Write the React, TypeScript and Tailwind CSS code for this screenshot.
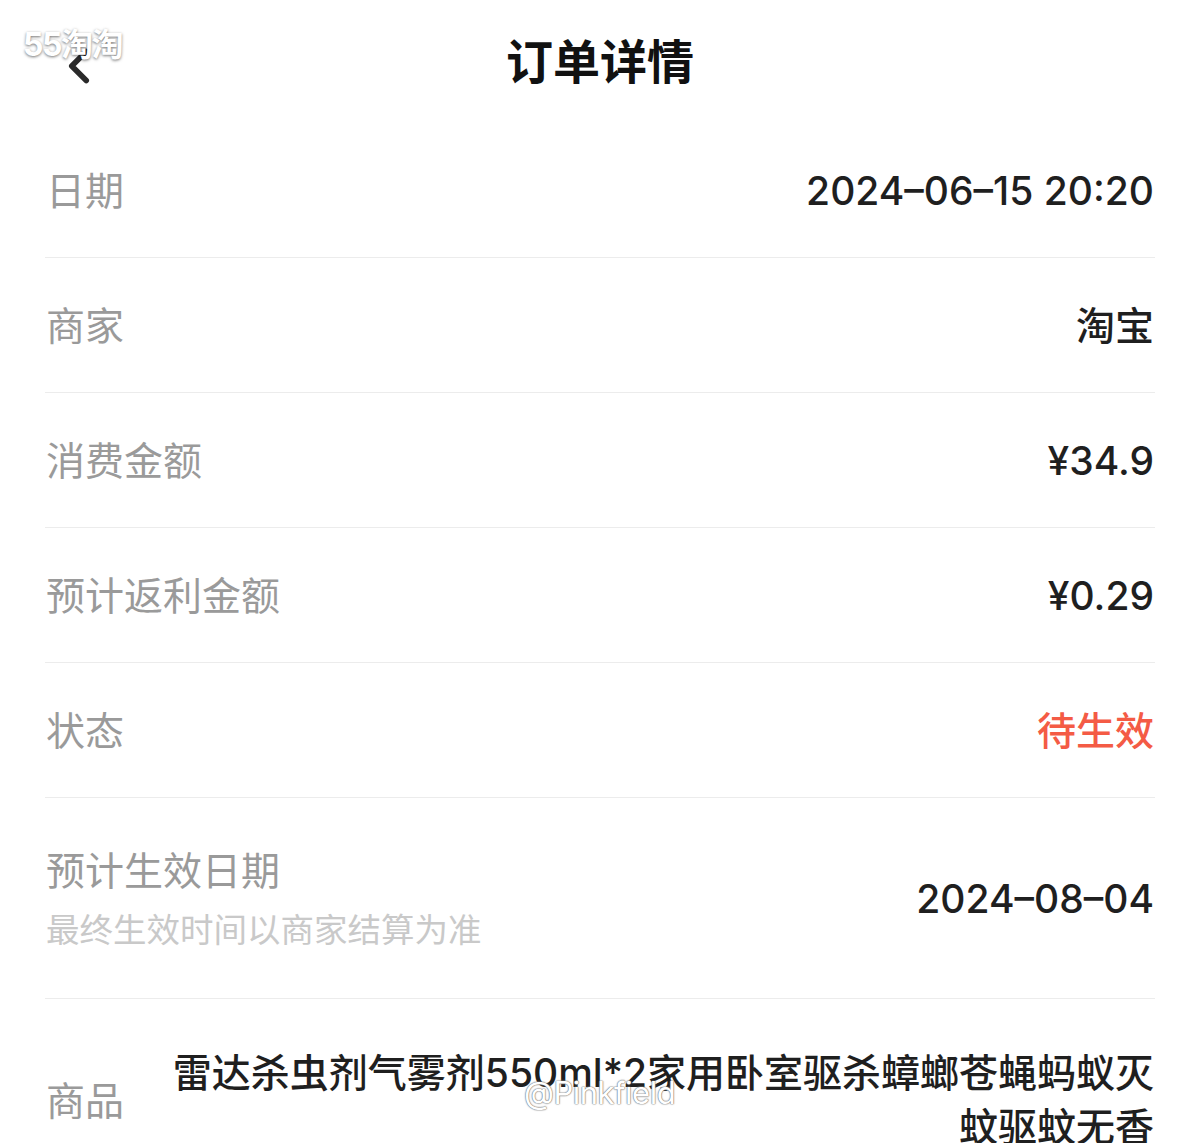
import { ChevronLeft } from "lucide-react";

const font = { fontFamily: '"Inter", "Noto Sans CJK SC", sans-serif' };

type Row = { label: string; value: string; accent?: boolean };

const rows: Row[] = [
  { label: "日期", value: "2024–06–15 20:20" },
  { label: "商家", value: "淘宝" },
  { label: "消费金额", value: "¥34.9" },
  { label: "预计返利金额", value: "¥0.29" },
  { label: "状态", value: "待生效", accent: true },
];

export default function App() {
  return (
    <div className="relative min-h-[1143px] w-[1200px] overflow-hidden bg-white" style={font}>
      {/* 顶部水印 */}
      <div className="absolute left-[23px] top-[21px] z-10 text-[32px] font-bold tracking-[-1.5px] text-white [text-shadow:0_1px_3px_rgba(0,0,0,0.55)]">
        55淘淘
      </div>

      {/* 标题栏 */}
      <header className="relative flex h-[123px] items-center justify-center">
        <ChevronLeft className="absolute left-[50px] top-[37px] h-[58px] w-[58px] text-[#2a2a2a]" strokeWidth={2.3} />
        <h1 className="text-[47px] font-bold leading-none text-[#111]">订单详情</h1>
      </header>

      <div className="mx-[45px]">
        {rows.map((r) => (
          <div key={r.label} className="flex h-[135px] items-center justify-between border-b border-[#ececec] px-px">
            <span className="text-[39px] leading-none text-[#9a9a9a]">{r.label}</span>
            <span className={`text-[39px] font-medium leading-none ${r.accent ? "text-[#f45b45]" : "text-[#1f1f1f]"}`}>
              {r.value}
            </span>
          </div>
        ))}

        {/* 预计生效日期 */}
        <div className="flex h-[201px] items-center justify-between border-b border-[#ececec] px-px">
          <div className="flex flex-col gap-[24px] pt-[2px]">
            <span className="text-[39px] leading-none text-[#9a9a9a]">预计生效日期</span>
            <span className="text-[33.5px] leading-none text-[#c9c9c9]">最终生效时间以商家结算为准</span>
          </div>
          <span className="text-[39px] font-medium leading-none text-[#1f1f1f]">2024–08–04</span>
        </div>

        {/* 商品 */}
        <div className="flex items-center justify-between px-px pt-[47px] pb-[40px]">
          <span className="shrink-0 text-[39px] leading-none text-[#9a9a9a]">商品</span>
          <p className="w-[996px] shrink-0 text-right text-[39px] font-medium leading-[54px] text-[#1f1f1f]">
            雷达杀虫剂气雾剂550ml*2家用卧室驱杀蟑螂苍蝇蚂蚁灭蚊驱蚊无香
          </p>
        </div>
      </div>

      {/* 底部水印 */}
      <div className="absolute left-[524px] top-[1077px] z-10 text-[31px] leading-none tracking-[-0.5px] text-white [text-shadow:0_0_1px_#777,0_0_1px_#777,0_0_2px_#999]">
        @Pinkfield
      </div>
    </div>
  );
}
